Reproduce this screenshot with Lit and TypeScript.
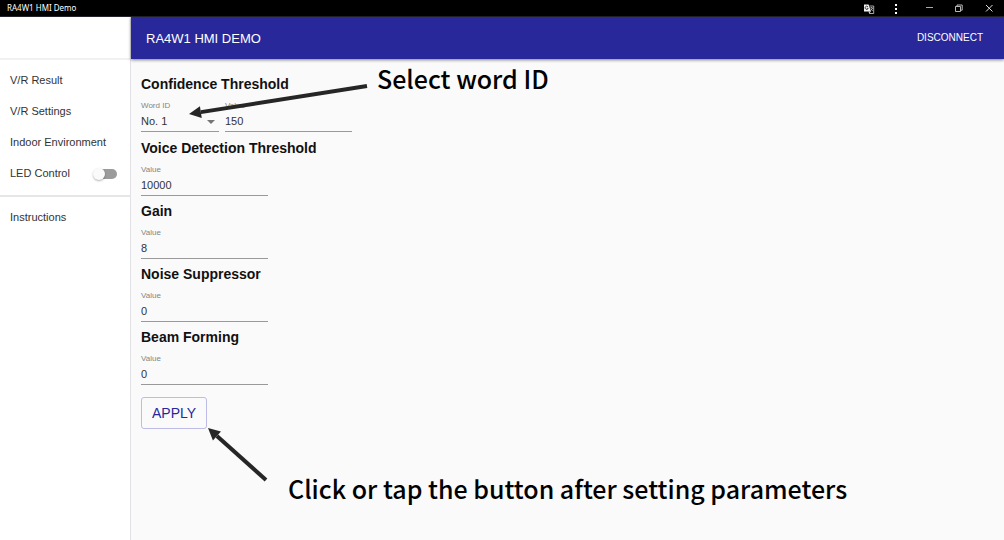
import { LitElement, html, css, svg } from "lit";
import { customElement, property, state } from "lit/decorators.js";

@customElement("title-bar")
class TitleBar extends LitElement {
  static styles = css`
    :host { display: block; }
    .bar {
      display: flex; align-items: center; justify-content: space-between;
      height: 16px; padding: 0 8px 0 7px; background: #000; color: #fff;
      border-bottom: 1px solid #24242c;
      font: 8px/16px "Noto Sans", "Open Sans", sans-serif;
    }
    .tools { display: flex; align-items: center; gap: 16px; }
    button {
      display: block; width: 14px; height: 16px; padding: 0; border: 0;
      background: none; color: inherit;
    }
    .more { margin: 0 3px 0 -3px; }
    svg { display: block; width: 14px; height: 14px; }
  `;
  render() {
    return html`
      <header class="bar">
        <span>RA4W1 HMI Demo</span>
        <div class="tools">
          <button aria-label="Translate"><svg viewBox="0 0 14 14">
            <path d="M7.5 5h4.2v7.5H7.2" fill="none" stroke="#bbb" stroke-width=".9" />
            <path d="M2 3.4h4.6L9 10.6H2z" fill="#f4f4f4" />
            <path d="M6 5.9a1.6 1.6 0 1 0 .2 1.4H4.8" fill="none" stroke="#222" stroke-width=".8" />
            <path d="M8 7h3.2M9.5 6v1M10.8 7.2 8.8 9.4M9 8l1.8 2" fill="none" stroke="#ccc" stroke-width=".7" />
            <path d="M6.5 10.6h2.4l-1.7 2z" fill="#ddd" />
          </svg></button>
          <button class="more" aria-label="More"><svg viewBox="0 0 14 14" fill="#fff">
            <rect x="6" y="3" width="2" height="2" /><rect x="6" y="7" width="2" height="2" /><rect x="6" y="11" width="2" height="2" />
          </svg></button>
          <button aria-label="Minimize"><svg viewBox="0 0 14 14"><path d="M4 6.5h7" stroke="#aaa" /></svg></button>
          <button aria-label="Restore"><svg viewBox="0 0 14 14" fill="none" stroke="#ccc" stroke-width=".9">
            <path d="M3.5 5.5h5v5h-5zM5 5.3V4h5.2v5.2H8.8" />
          </svg></button>
          <button aria-label="Close"><svg viewBox="0 0 14 14"><path d="m4 4 6.5 6.5M10.5 4 4 10.5" stroke="#ddd" /></svg></button>
        </div>
      </header>`;
  }
}

@customElement("side-nav")
class SideNav extends LitElement {
  @state() led = false;
  static styles = css`
    :host { display: block; background: #fff; border-right: 1px solid #e2e2e6; }
    .blank { height: 41px; border-bottom: 2px solid #f1f1f1; }
    .list { display: flex; flex-direction: column; padding: 5px 0; }
    .list.first { border-bottom: 2px solid #e6e6e6; padding-bottom: 6px; }
    a, .row {
      display: flex; align-items: center; justify-content: space-between;
      height: 31px; padding: 0 13px 0 10px; color: #333; text-decoration: none;
      font: 11px/15px "Liberation Sans", Arial, sans-serif;
    }
    .switch {
      appearance: none; position: relative; width: 20px; height: 10px; margin: 0;
      border-radius: 5px; background: #9b9b9b;
    }
    .switch::before {
      content: ""; position: absolute; left: -4px; top: -1px; width: 12px; height: 12px;
      border-radius: 50%; background: #fafafa; box-shadow: 0 1px 2px rgba(0, 0, 0, .3);
    }
    .switch:checked::before { left: 10px; }
  `;
  render() {
    return html`
      <div class="blank"></div>
      <nav>
        <div class="list first">
          <a href="#result">V/R Result</a>
          <a href="#settings">V/R Settings</a>
          <a href="#environment">Indoor Environment</a>
          <label class="row">LED Control
            <input class="switch" type="checkbox" .checked=${this.led}
              @change=${(e: Event) => (this.led = (e.target as HTMLInputElement).checked)} />
          </label>
        </div>
        <div class="list"><a href="#instructions">Instructions</a></div>
      </nav>`;
  }
}

@customElement("value-field")
class ValueField extends LitElement {
  @property() label = "Value";
  @property() value = "";
  @property({ type: Array }) options: string[] = [];
  static styles = css`
    :host { display: block; font-family: "Liberation Sans", Arial, sans-serif; }
    label { display: block; font-size: 8px; line-height: 12px; color: #858585; }
    .box { position: relative; border-bottom: 1px solid #999; }
    input, select {
      display: block; box-sizing: border-box; width: 100%; height: 19px; margin: 0;
      padding: 0; border: 0; outline: 0; border-radius: 0; background: none;
      appearance: none; color: #333; font: 11px/19px "Liberation Sans", Arial, sans-serif;
    }
    svg { position: absolute; right: 4px; top: 8px; width: 8px; height: 4px; pointer-events: none; }
  `;
  render() {
    return html`
      <label for="control">${this.label}</label>
      <div class="box">
        ${this.options.length
          ? html`<select id="control">${this.options.map((o) => html`<option ?selected=${o === this.value}>${o}</option>`)}</select>
              <svg viewBox="0 0 8 4"><path d="M0 0h8L4 4z" fill="#757575" /></svg>`
          : html`<input id="control" type="text" .value=${this.value} />`}
      </div>`;
  }
}

@customElement("app-root")
class AppRoot extends LitElement {
  settings = [
    { name: "Voice Detection Threshold", value: "10000" },
    { name: "Gain", value: "8" },
    { name: "Noise Suppressor", value: "0" },
    { name: "Beam Forming", value: "0" },
  ];
  static styles = css`
    :host {
      display: flex; flex-direction: column; min-height: 100vh; background: #fafafa;
      font-family: "Liberation Sans", Arial, sans-serif; color: #111;
    }
    .shell { display: grid; grid-template-columns: 131px 1fr; flex: 1; }
    .main { display: flex; flex-direction: column; }
    .appbar {
      display: flex; align-items: center; justify-content: space-between;
      height: 42px; padding: 0 21px 0 15px; background: #28289b; color: #fff;
      box-shadow: 0 1px 3px rgba(0, 0, 0, .5);
    }
    .appbar h1 { margin: 0; font-size: 13px; font-weight: 400; }
    .appbar button { padding: 0; border: 0; background: none; color: #fff; font: 10px/16px "Liberation Sans", Arial, sans-serif; }
    .content { position: relative; flex: 1; padding: 15px 10px; }
    form { display: flex; flex-direction: column; gap: 5px; align-items: flex-start; }
    h2 { margin: 0 0 6px; font-size: 14px; line-height: 20px; font-weight: 700; }
    .pair { display: flex; gap: 6px; padding-bottom: 1px; }
    .field { width: 127px; }
    .pick { width: 78px; }
    .apply {
      margin-top: 7px; height: 32px; padding: 0 10px; border: 1px solid #bcbce6;
      border-radius: 3px; background: none; color: #28289b;
      font: 14px/20px "Liberation Sans", Arial, sans-serif;
    }
    .note {
      position: absolute; margin: 0; white-space: nowrap; color: #000;
      font: 500 25px/32px "Noto Sans CJK JP", "Noto Sans", sans-serif;
    }
    .select-note { left: 246px; top: 3px; }
    .apply-note { left: 157px; top: 413px; }
    .arrows { position: absolute; left: 0; top: 0; width: 260px; height: 440px; pointer-events: none; }
  `;
  arrow(x1: number, y1: number, x2: number, y2: number) {
    const d = Math.hypot(x2 - x1, y2 - y1);
    const ux = (x1 - x2) / d, uy = (y1 - y2) / d;
    const bx = x2 + ux * 12, by = y2 + uy * 12;
    return svg`
      <line x1=${x1} y1=${y1} x2=${bx} y2=${by} stroke="#262626" stroke-width="4" />
      <polygon points="${x2},${y2} ${bx - uy * 6},${by + ux * 6} ${bx + uy * 6},${by - ux * 6}" fill="#262626" />`;
  }
  render() {
    return html`
      <title-bar></title-bar>
      <div class="shell">
        <side-nav></side-nav>
        <div class="main">
          <header class="appbar"><h1>RA4W1 HMI DEMO</h1><button>DISCONNECT</button></header>
          <main class="content">
            <form @submit=${(e: Event) => e.preventDefault()}>
              <section>
                <h2>Confidence Threshold</h2>
                <div class="pair">
                  <value-field class="pick" label="Word ID" value="No. 1" .options=${["No. 1", "No. 2", "No. 3"]}></value-field>
                  <value-field class="field" value="150"></value-field>
                </div>
              </section>
              ${this.settings.map((s) => html`<section>
                <h2>${s.name}</h2>
                <value-field class="field" value=${s.value}></value-field>
              </section>`)}
              <button class="apply">APPLY</button>
            </form>
            <svg class="arrows" viewBox="0 0 260 440">
              ${this.arrow(236, 27, 58, 55)}
              ${this.arrow(135, 421, 77, 369)}
            </svg>
            <p class="note select-note">Select word ID</p>
            <p class="note apply-note">Click or tap the button after setting parameters</p>
          </main>
        </div>
      </div>`;
  }
}
